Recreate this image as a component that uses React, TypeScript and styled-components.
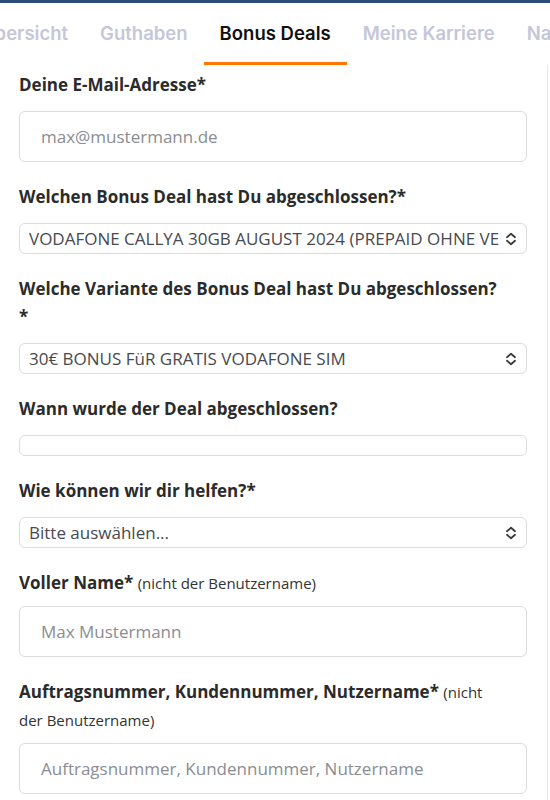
import React from "react";
import styled, { createGlobalStyle } from "styled-components";

const Global = createGlobalStyle`
  html, body { margin: 0; padding: 0; background: #fff; }
  body { font-family: "Open Sans", "Liberation Sans", sans-serif; }
  * { box-sizing: border-box; }
`;

const Page = styled.div`
  width: 550px;
  height: 800px;
  overflow: hidden;
  border-top: 3px solid #2c4a7c;
  background: #fff;
`;

const TabBar = styled.nav`
  height: 62px;
  display: flex;
  align-items: stretch;
  overflow: hidden;
  white-space: nowrap;
`;

const TabTrack = styled.div`
  display: flex;
  align-items: stretch;
  margin-left: -35px;
`;

const Tab = styled.div<{ $active?: boolean }>`
  display: flex;
  align-items: center;
  padding: 1px 16px 0;
  font-family: Inter, "Liberation Sans", sans-serif;
  font-size: 18.5px;
  font-weight: 600;
  color: ${(p) => (p.$active ? "#111" : "#c5c7d9")};
  border-bottom: 3px solid ${(p) => (p.$active ? "#ff7700" : "transparent")};
`;

const Form = styled.form`
  padding: 6px 0 0 19px;
  margin-right: 2px;
  border-right: 1px solid #e8e8e8;
  height: 735px;
  display: flex;
  flex-direction: column;
  gap: 21px;
`;

const Group = styled.div<{ $tight?: boolean }>`
  display: flex;
  flex-direction: column;
  gap: ${(p) => (p.$tight ? "9px" : "12px")};
  width: 508px;
`;

const Label = styled.label`
  font-size: 17px;
  font-weight: 700;
  line-height: 28px;
  color: #2b2b2b;
  padding-right: 24px;
`;

const Hint = styled.span`
  font-size: 15px;
  font-weight: 400;
  color: #333;
`;

const TextInput = styled.div`
  height: 51px;
  border: 1px solid #dcdcdc;
  border-radius: 6px;
  display: flex;
  align-items: center;
  padding: 0 21px;
  font-size: 17px;
  color: #8a8d93;
`;

const DateInput = styled.div`
  height: 21px;
  border: 1px solid #dcdcdc;
  border-radius: 6px;
`;

const Select = styled.div`
  height: 31px;
  border: 1px solid #dcdcdc;
  border-radius: 6px;
  display: flex;
  align-items: center;
  padding: 0 9px 0 9px;
  font-size: 17px;
  color: #474a50;
  gap: 6px;
`;

const SelectText = styled.span`
  flex: 1;
  overflow: hidden;
  white-space: nowrap;
  text-overflow: clip;
`;

const Chevrons = () => (
  <svg width="12" height="14" viewBox="0 0 12 14" fill="none" stroke="#3a3a3a" strokeWidth="1.8" strokeLinecap="round" strokeLinejoin="round">
    <path d="M2 5.2 L6 1.8 L10 5.2" />
    <path d="M2 8.8 L6 12.2 L10 8.8" />
  </svg>
);

const tabs = ["Übersicht", "Guthaben", "Bonus Deals", "Meine Karriere", "Nachrichten"];

export default function App() {
  return (
    <Page>
      <Global />
      <TabBar>
        <TabTrack>
          {tabs.map((t) => (
            <Tab key={t} $active={t === "Bonus Deals"}>{t}</Tab>
          ))}
        </TabTrack>
      </TabBar>
      <Form>
        <Group>
          <Label>Deine E-Mail-Adresse*</Label>
          <TextInput>max@mustermann.de</TextInput>
        </Group>
        <Group>
          <Label>Welchen Bonus Deal hast Du abgeschlossen?*</Label>
          <Select>
            <SelectText>VODAFONE CALLYA 30GB AUGUST 2024 (PREPAID OHNE VERTRAG)</SelectText>
            <Chevrons />
          </Select>
        </Group>
        <Group>
          <Label>Welche Variante des Bonus Deal hast Du abgeschlossen?*</Label>
          <Select>
            <SelectText>30€ BONUS FüR GRATIS VODAFONE SIM</SelectText>
            <Chevrons />
          </Select>
        </Group>
        <Group>
          <Label>Wann wurde der Deal abgeschlossen?</Label>
          <DateInput />
        </Group>
        <Group>
          <Label>Wie können wir dir helfen?*</Label>
          <Select>
            <SelectText>Bitte auswählen...</SelectText>
            <Chevrons />
          </Select>
        </Group>
        <Group $tight>
          <Label>Voller Name* <Hint>(nicht der Benutzername)</Hint></Label>
          <TextInput>Max Mustermann</TextInput>
        </Group>
        <Group $tight>
          <Label>Auftragsnummer, Kundennummer, Nutzername* <Hint>(nicht der Benutzername)</Hint></Label>
          <TextInput>Auftragsnummer, Kundennummer, Nutzername</TextInput>
        </Group>
      </Form>
    </Page>
  );
}
